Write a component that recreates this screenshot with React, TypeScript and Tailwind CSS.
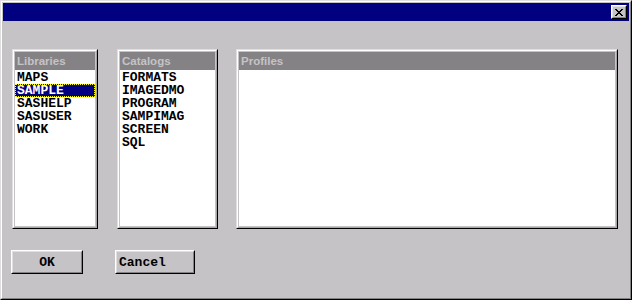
import React from "react";

const mono = { fontFamily: '"Liberation Mono", "DejaVu Sans Mono", monospace' };
const sans = { fontFamily: '"Liberation Sans", Arial, sans-serif' };

function Panel({
  title,
  items,
  selected,
  width,
}: {
  title: string;
  items: string[];
  selected?: number;
  width: string;
}) {
  return (
    <div
      className={`${width} h-[180px] border border-t-[#dfdfdf] border-l-[#dfdfdf] border-r-black border-b-black`}
    >
      <div className="h-full border border-t-white border-l-white border-r-[#a8a5a8] border-b-[#a8a5a8] p-px bg-[#c6c3c6]">
        <div className="h-full bg-white flex flex-col">
          <div
            className="h-[18px] bg-[#848284] text-[#c6c3c6] font-bold text-[11.5px] leading-[18px] pl-[2px]"
            style={sans}
          >
            {title}
          </div>
          <div className="pt-px flex flex-col">
            {items.map((it, i) => (
              <div
                key={it}
                className={
                  i === selected
                    ? "h-[13px] pt-px leading-[12px] pl-[2px] bg-[#000080] text-white font-bold text-[13px] whitespace-pre outline-1 outline-dotted outline-[#ffff00] -outline-offset-1"
                    : "h-[13px] pt-px leading-[12px] pl-[2px] text-black font-bold text-[13px] whitespace-pre"
                }
                style={mono}
              >
                {it}
              </div>
            ))}
          </div>
        </div>
      </div>
    </div>
  );
}

function Button({ label, width, align }: { label: string; width: string; align: string }) {
  return (
    <div
      className={`${width} h-[24px] border border-t-white border-l-white border-r-black border-b-black`}
    >
      <div
        className={`h-full border border-t-[#dfdfdf] border-l-[#dfdfdf] border-r-[#848284] border-b-[#848284] bg-[#c6c3c6] flex items-center ${align} text-black font-bold text-[13px] leading-[15px] whitespace-pre`}
        style={mono}
      >
        {label}
      </div>
    </div>
  );
}

export default function App() {
  return (
    <div className="w-[632px] h-[300px] border border-t-[#dfdfdf] border-l-[#dfdfdf] border-b-black border-r-black bg-[#c6c3c6]">
      <div className="h-full border border-t-white border-l-white border-b-[#848284] border-r-[#848284] p-px flex flex-col">
        <div className="h-[18px] bg-[#000080] flex items-center justify-end pr-[2px]">
          <div className="w-[16px] h-[14px] border border-t-white border-l-white border-r-black border-b-black">
            <div className="h-full border border-t-[#dfdfdf] border-l-[#dfdfdf] border-r-[#848284] border-b-[#848284] bg-[#c6c3c6] flex items-center justify-center">
              <svg width="8" height="7" viewBox="0 0 8 7" shapeRendering="crispEdges">
                <path
                  d="M0 0h2v1h-2zM6 0h2v1h-2zM1 1h2v1h-2zM5 1h2v1h-2zM2 2h4v1h-4zM3 3h2v1h-2zM2 4h4v1h-4zM1 5h2v1h-2zM5 5h2v1h-2zM0 6h2v1h-2zM6 6h2v1h-2z"
                  fill="#000"
                />
              </svg>
            </div>
          </div>
        </div>
        <div className="flex-1 pl-[9px] pt-[28px] flex flex-col">
          <div className="flex">
            <Panel
              title="Libraries"
              width="w-[86px]"
              items={["MAPS", "SAMPLE", "SASHELP", "SASUSER", "WORK"]}
              selected={1}
            />
            <div className="w-[19px]" />
            <Panel
              title="Catalogs"
              width="w-[101px]"
              items={["FORMATS", "IMAGEDMO", "PROGRAM", "SAMPIMAG", "SCREEN", "SQL"]}
            />
            <div className="w-[18px]" />
            <Panel title="Profiles" width="w-[382px]" items={[]} />
          </div>
          <div className="flex mt-[21px] ml-[-1px]">
            <Button label="OK" width="w-[72px]" align="justify-center" />
            <div className="w-[32px]" />
            <Button label="Cancel" width="w-[80px]" align="justify-start pl-[2px]" />
          </div>
        </div>
      </div>
    </div>
  );
}
